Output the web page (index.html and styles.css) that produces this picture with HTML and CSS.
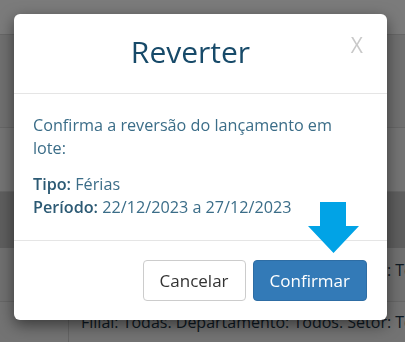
FILE: index.html
```html
<!DOCTYPE html>
<html lang="pt-BR">
<head>
<meta charset="utf-8">
<title>Reverter</title>
<link rel="stylesheet" href="styles.css">
</head>
<body>
<div class="page">
  <div class="row row-head"></div>
  <div class="row row-a"></div>
  <div class="row row-b"></div>
  <div class="row row-band"></div>
  <div class="row row-c"><span class="cell-text">Filial: Todas. Departamento: Todos. Setor: Todos</span></div>
  <div class="row row-d"><span class="cell-gap"></span><span class="cell-text">Filial: Todas. Departamento: Todos. Setor: Todos</span></div>
</div>
<div class="backdrop"></div>
<div class="modal">
  <div class="modal-header">
    <h4 class="modal-title">Reverter</h4>
    <span class="close">X</span>
  </div>
  <div class="modal-body">
    <p class="intro">Confirma a reversão do lançamento em lote:</p>
    <p class="details"><b>Tipo:</b> Férias<br><b>Período:</b> 22/12/2023 a 27/12/2023</p>
  </div>
  <div class="modal-footer">
    <button class="btn btn-default">Cancelar</button>
    <button class="btn btn-primary">Confirmar</button>
  </div>
  <svg class="arrow" width="52" height="52" viewBox="0 0 52 52"><polygon points="12,0 38,0 38,24 51,24 25.5,51 0,24 12,24" fill="#01a3e6"/></svg>
</div>
</body>
</html>
```
FILE: styles.css
```css
* { box-sizing: border-box; }
html, body { margin: 0; padding: 0; }
body {
  width: 405px;
  height: 342px;
  overflow: hidden;
  font-family: "Open Sans", sans-serif;
  background: #e6e6e6;
}
.page { display: flex; flex-direction: column; overflow: hidden; height: 342px; }
.row { border-bottom: 1px solid #cfcfcf; overflow: hidden; flex: none; }
.row-head { height: 35px; background: #f6f6f6; }
.row-a { height: 93px; background: #e0e0e0; }
.row-b { height: 64px; background: #e8e8e8; }
.row-band { height: 56px; background: #bdbdbd; border-bottom: none; }
.row-c { height: 54px; background: #e0e0e0; display: flex; align-items: flex-start; padding: 11px 0 0 81px; }
.row-d { height: 40px; background: #e6e6e6; display: flex; align-items: flex-start; padding-top: 9px; border-bottom: none; }
.cell-gap { width: 69px; height: 60px; margin-top: -9px; border-right: 1px solid #c8c8c8; margin-right: 12px; flex: none; }
.cell-text { font-size: 16px; color: #1d3547; white-space: nowrap; }
.backdrop {
  position: fixed;
  inset: 0;
  background: rgba(0, 0, 0, 0.5);
}
.modal {
  position: absolute;
  left: 14px;
  top: 14px;
  width: 373px;
  background: #fff;
  border-radius: 6px;
  box-shadow: 0 5px 15px rgba(0, 0, 0, 0.5);
}
.modal-header {
  height: 80px;
  border-bottom: 1px solid #e5e5e5;
  display: flex;
  align-items: center;
  justify-content: center;
  padding-right: 20px;
}
.modal-title {
  margin: 0;
  font-size: 30px;
  font-weight: 400;
  color: #174a69;
  line-height: 1;
  padding-bottom: 4px;
}
.close {
  position: absolute;
  right: 24px;
  top: 21px;
  font-size: 21px;
  color: #c9c9c9;
  line-height: 1;
}
.modal-body {
  padding: 20px 19px 22px 19px;
  font-size: 16.2px;
  line-height: 22.6px;
  color: #3b6d88;
}
.modal-body p { margin: 0; }
.intro { margin-bottom: 14px !important; }
.modal-body b { font-weight: 600; color: #2c5a74; }
.modal-footer {
  border-top: 1px solid #e5e5e5;
  padding: 19px 20px 19px;
  display: flex;
  justify-content: flex-end;
  gap: 7px;
}
.btn {
  font-family: "Open Sans", sans-serif;
  font-size: 17px;
  height: 41px;
  padding: 0 16px;
  border-radius: 4px;
  border: 1px solid #ccc;
  background: #fff;
  color: #333;
}
.btn-primary {
  background: #337ab7;
  border-color: #2e6da4;
  color: #fff;
}
.arrow {
  position: absolute;
  left: 294px;
  top: 188px;
}
```
